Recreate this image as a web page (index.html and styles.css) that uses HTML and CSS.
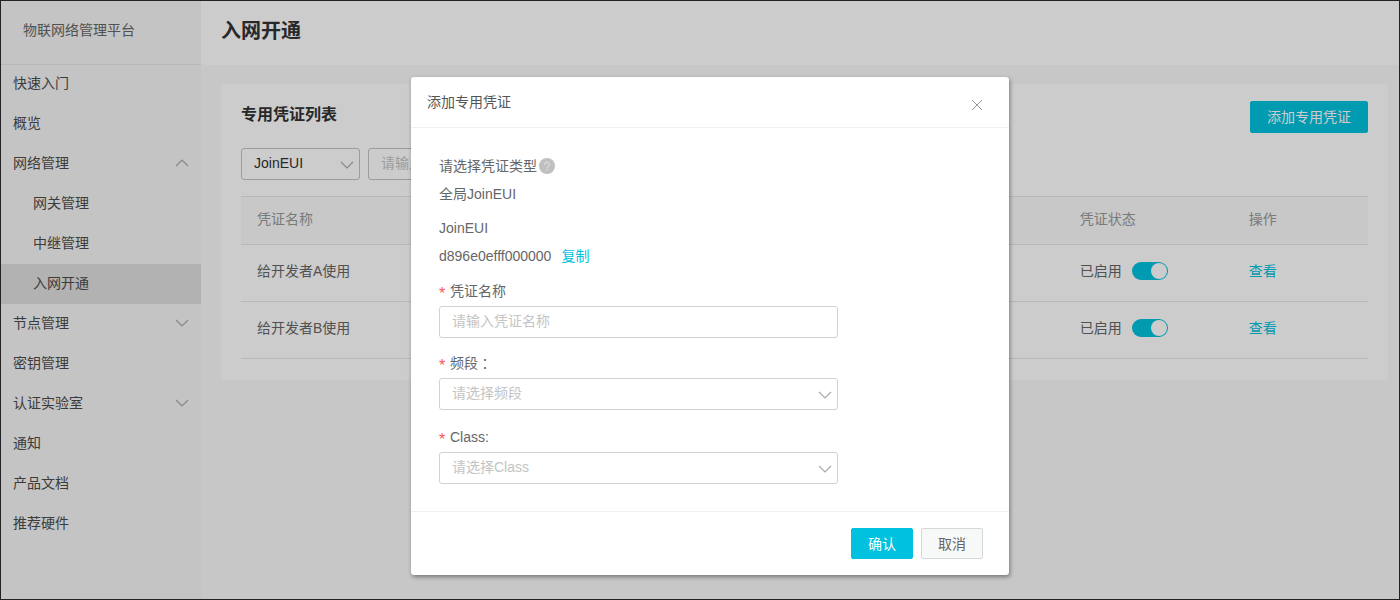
FILE: index.html
```html
<!DOCTYPE html>
<html lang="zh-CN">
<head>
<meta charset="utf-8">
<meta name="viewport" content="width=device-width, initial-scale=1">
<title>入网开通</title>
<link rel="stylesheet" href="styles.css">
</head>
<body>
<div class="app">
  <aside class="sidebar">
    <div class="brand">物联网络管理平台</div>
    <nav class="menu">
      <a class="menu-item" href="#">快速入门</a>
      <a class="menu-item" href="#">概览</a>
      <a class="menu-item" href="#">网络管理
        <svg class="chevron" viewBox="0 0 14 8"><path d="M1 7 7 1l6 6"/></svg></a>
      <a class="menu-item sub" href="#">网关管理</a>
      <a class="menu-item sub" href="#">中继管理</a>
      <a class="menu-item sub active" href="#">入网开通</a>
      <a class="menu-item" href="#">节点管理
        <svg class="chevron" viewBox="0 0 14 8"><path d="m1 1 6 6 6-6"/></svg></a>
      <a class="menu-item" href="#">密钥管理</a>
      <a class="menu-item" href="#">认证实验室
        <svg class="chevron" viewBox="0 0 14 8"><path d="m1 1 6 6 6-6"/></svg></a>
      <a class="menu-item" href="#">通知</a>
      <a class="menu-item" href="#">产品文档</a>
      <a class="menu-item" href="#">推荐硬件</a>
    </nav>
  </aside>

  <main class="main">
    <header class="page-header"><h1 class="page-title">入网开通</h1></header>
    <section class="card">
      <div class="card-head">
        <h2 class="card-title">专用凭证列表</h2>
        <button class="btn btn-primary btn-add" type="button">添加专用凭证</button>
      </div>
      <div class="filters">
        <div class="select-wrap filter-type">
          <select class="control" aria-label="筛选类型"><option>JoinEUI</option></select>
          <svg class="chevron" viewBox="0 0 14 8"><path d="m1 1 6 6 6-6"/></svg>
        </div>
        <input class="control filter-text" type="text" placeholder="请输入" aria-label="筛选内容">
      </div>
      <table class="table">
        <colgroup><col class="col-name"><col class="col-status"><col class="col-action"></colgroup>
        <thead>
          <tr><th>凭证名称</th><th>凭证状态</th><th>操作</th></tr>
        </thead>
        <tbody>
          <tr>
            <td>给开发者A使用</td>
            <td><label class="toggle">已启用<input class="switch" type="checkbox" checked></label></td>
            <td><a class="link" href="#">查看</a></td>
          </tr>
          <tr>
            <td>给开发者B使用</td>
            <td><label class="toggle">已启用<input class="switch" type="checkbox" checked></label></td>
            <td><a class="link" href="#">查看</a></td>
          </tr>
        </tbody>
      </table>
    </section>
  </main>

  <div class="overlay">
    <form class="modal" role="dialog" aria-labelledby="modal-title">
      <header class="modal-head">
        <h2 class="modal-title" id="modal-title">添加专用凭证</h2>
        <button class="close" type="button" aria-label="关闭">
          <svg class="close-icon" viewBox="0 0 12 12"><path d="m1 1 10 10M11 1 1 11"/></svg>
        </button>
      </header>
      <div class="modal-body">
        <div class="info">
          <p class="line">请选择凭证类型
            <svg class="help" viewBox="0 0 16 16"><circle cx="8" cy="8" r="8"/><path d="M5.600 6.600a2.400 2.400 0 1 1 3.500 2.100Q8 9.300 8 10.300M8 11.300v1.400"/></svg></p>
          <p class="line">全局JoinEUI</p>
        </div>
        <div class="info">
          <p class="line">JoinEUI</p>
          <p class="line"><span>d896e0efff000000</span><a class="link copy" href="#">复制</a></p>
        </div>
        <div class="field">
          <label class="label" for="name">凭证名称</label>
          <input class="control" id="name" type="text" placeholder="请输入凭证名称">
        </div>
        <div class="field">
          <label class="label" for="band">频段<span class="colon">：</span></label>
          <div class="select-wrap">
            <select class="control empty" id="band"><option>请选择频段</option></select>
            <svg class="chevron" viewBox="0 0 14 8"><path d="m1 1 6 6 6-6"/></svg>
          </div>
        </div>
        <div class="field">
          <label class="label" for="class">Class:</label>
          <div class="select-wrap">
            <select class="control empty" id="class"><option>请选择Class</option></select>
            <svg class="chevron" viewBox="0 0 14 8"><path d="m1 1 6 6 6-6"/></svg>
          </div>
        </div>
      </div>
      <footer class="modal-foot">
        <button class="btn btn-primary" type="button">确认</button>
        <button class="btn btn-default" type="button">取消</button>
      </footer>
    </form>
  </div>
</div>
</body>
</html>
```
FILE: styles.css
```css
* { box-sizing: border-box; }

body {
  margin: 0;
  color: #666;
  font: 14px/20px "Liberation Sans", "Noto Sans CJK SC", sans-serif;
}

h1, h2, p { margin: 0; }
button, input, select { font: inherit; }

.app {
  position: relative;
  display: flex;
  min-height: 100vh;
  border: 1px solid #222;
  background: #f9f9f9;
}

/* Sidebar */
.sidebar {
  flex: none;
  width: 200px;
  background: #f5f5f5;
}
.brand {
  height: 64px;
  padding: 19px 22px;
  border-bottom: 1px solid #e6e6e6;
}
.menu { margin-top: -1px; }
.menu-item {
  display: flex;
  align-items: center;
  justify-content: space-between;
  height: 40px;
  padding: 0 12px 2px;
  color: #4c4c4c;
  text-decoration: none;
}
.menu-item.sub { padding-left: 32px; }
.menu-item.active { background: #dfdfdf; }

.chevron {
  width: 14px;
  height: 8px;
  fill: none;
  stroke: #aaa;
  stroke-width: 1.2;
}

/* Main area */
.main { flex: 1; min-width: 0; }
.page-header {
  height: 64px;
  padding: 16px 20px;
  background: #fff;
}
.page-title {
  color: #333;
  font-size: 20px;
  line-height: 28px;
}
.card {
  margin: 19px 11px 0 20px;
  padding: 17px 20px 21px;
  background: #fff;
}
.card-head {
  display: flex;
  align-items: center;
  justify-content: space-between;
}
.card-title {
  padding-bottom: 4px;
  color: #333;
  font-size: 16px;
  line-height: 24px;
}

.btn {
  height: 31px;
  padding: 0 16px;
  border: 1px solid #00c1de;
  border-radius: 2px;
}
.btn-primary { background: #00c1de; color: #fff; }
.btn-default { background: #f7f8f8; border-color: #d5d8d9; color: #666; }
.btn-add { height: 32px; }

.control {
  width: 100%;
  height: 32px;
  padding: 0 12px 2px;
  border: 1px solid #d0d3d4;
  border-radius: 3px;
  outline: 0;
  background: #fff;
  color: #333;
  appearance: none;
}
.control::placeholder { color: #c4c4c4; opacity: 1; }
.control.empty { color: #c4c4c4; }

.select-wrap {
  display: grid;
  align-items: center;
}
.select-wrap > * { grid-area: 1 / 1; }
.select-wrap .chevron {
  justify-self: end;
  margin: 2px 6px 0 0;
  pointer-events: none;
}

.filters { display: flex; gap: 8px; margin: 15px 0 16px; }
.filter-type { width: 119px; }
.filter-text { width: 200px; }
.filters .control { border-color: #c4c4c4; }

.table {
  width: 100%;
  border-spacing: 0;
  table-layout: fixed;
}
.col-name { width: 73%; }
.col-status { width: 15%; }
.col-action { width: 12%; }
.table th, .table td {
  height: 57px;
  padding: 0 16px 4px;
  border-bottom: 1px solid #e6e6e6;
  text-align: left;
}
.table th {
  height: 49px;
  border-top: 1px solid #e6e6e6;
  background: #fbfbfb;
  color: #999;
  font-weight: normal;
}
.toggle { display: flex; align-items: center; gap: 10px; }
.switch {
  display: flex;
  justify-content: flex-end;
  width: 36px;
  height: 18px;
  margin: 0;
  padding: 1px;
  border-radius: 9px;
  background: #00c1de;
  appearance: none;
}
.switch::before {
  content: "";
  width: 16px;
  height: 16px;
  border-radius: 50%;
  background: #fff;
}
.link { color: #00c1de; text-decoration: none; }

/* Dialog */
.overlay {
  position: absolute;
  inset: 0;
  display: flex;
  align-items: flex-start;
  justify-content: center;
  padding: 76px 0 0 20px;
  background: rgba(0, 0, 0, 0.2);
}
.modal {
  width: 598px;
  border-radius: 3px;
  background: #fff;
  box-shadow: 1px 2px 4px rgba(0, 0, 0, 0.4);
}
.modal-head {
  display: flex;
  align-items: center;
  justify-content: space-between;
  height: 51px;
  padding: 0 25px 0 16px;
  border-bottom: 1px solid #f0f0f0;
}
.modal-title { color: #555; font-size: 14px; font-weight: normal; }
.close {
  display: flex;
  margin-top: 5px;
  padding: 1px;
  border: 0;
  background: none;
}
.close-icon { width: 12px; height: 12px; fill: none; stroke: #999; }
.modal-body { padding: 24px 171px 27px 28px; }
.info { margin-bottom: 6px; }
.line { display: flex; align-items: center; height: 28px; }
.help { width: 16px; height: 16px; margin-left: 2px; fill: #c0c0c0; }
.help path { fill: none; stroke: #e8e8e8; }
.copy { margin-left: 10px; }
.field + .field { margin-top: 10px; }
.field + .field + .field { margin-top: 12px; }
.label { display: flex; align-items: center; height: 30px; }
.label::before {
  content: "*";
  width: 11px;
  padding-top: 6px;
  color: #f55;
  font-size: 16px;
}
.colon { font-family: "Noto Sans CJK TC", sans-serif; }
.modal-foot {
  display: flex;
  justify-content: flex-end;
  gap: 8px;
  padding: 16px 26px;
  border-top: 1px solid #f0f0f0;
}
```
